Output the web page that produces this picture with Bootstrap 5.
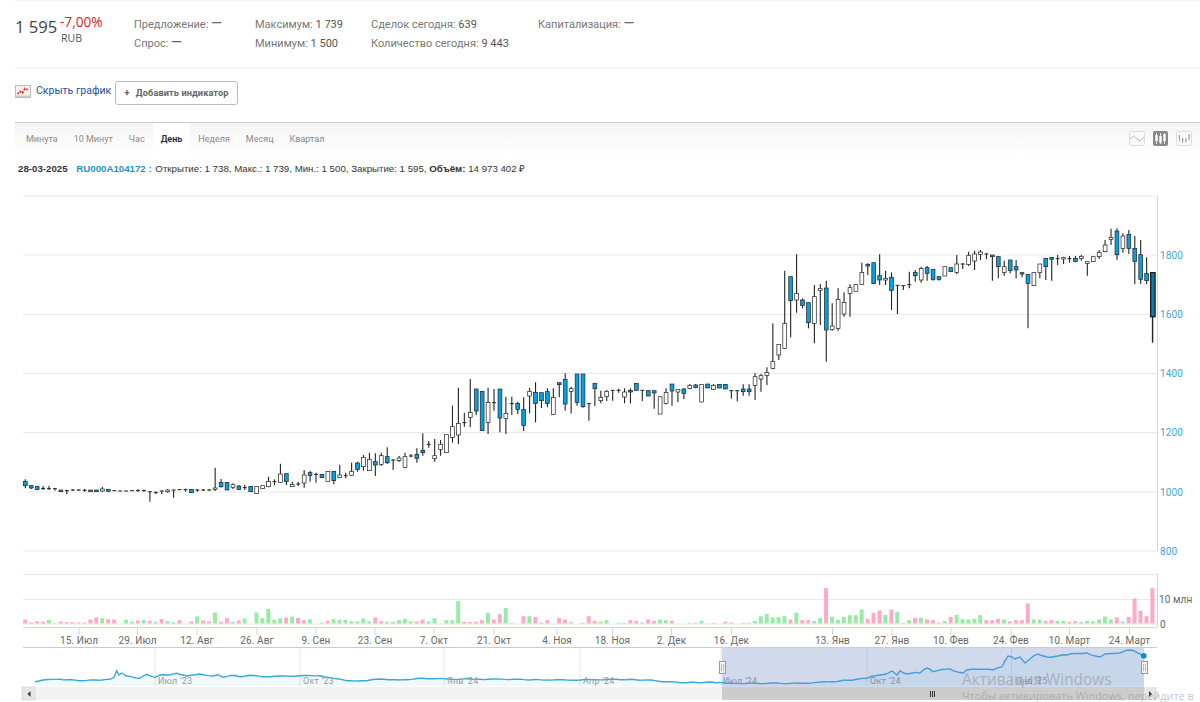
<!DOCTYPE html>
<html lang="ru">
<head>
<meta charset="utf-8">
<title>RU000A104172</title>
<link href="https://cdn.jsdelivr.net/npm/bootstrap@5.3.0/dist/css/bootstrap.min.css" rel="stylesheet">
<style>
html,body{margin:0;height:702px;overflow:hidden;background:#fff;}
body{font-family:Roboto,"Liberation Sans",sans-serif;color:#777;}
.page-rule{height:2px;margin-left:15px;background:#f5f5f5;}
.quote-bar{height:67px;margin-left:15px;font-size:11px;line-height:19px;border-bottom:2px solid #f4f4f4;padding-top:13px;}
.price-main{font-family:"Open Sans",sans-serif;font-size:16.6px;line-height:25px;color:#444;width:45px;white-space:nowrap;margin-top:-1px;}
.price-side{font-family:"Open Sans",sans-serif;width:74px;line-height:16px;white-space:nowrap;margin-top:-1px;}
.price-change{font-size:13.6px;color:#d8232a;line-height:16px;}
.price-cur{font-size:10.5px;color:#555;line-height:15px;padding-left:1px;margin-top:1px;}
.stat-a{width:121px;}.stat-b{width:116px;}.stat-c{width:167px;}
.stat-val{color:#555;}
.stat-dash{font-size:14px;line-height:1;color:#666;}
.tool-row{height:53px;margin-left:15px;padding-top:12px;}
.hide-link{font-size:10.5px;color:#1d4f9f;text-decoration:none;margin-left:5px;margin-right:5px;white-space:nowrap;line-height:20px;width:74px;}
.add-btn{font-size:9.2px;font-weight:700;color:#666;background:#fff;border:1px solid #bbb;border-radius:3px;height:24px;width:123px;padding:0;letter-spacing:.1px;}
.add-btn b{color:#666;margin-right:4px;}
.tab-bar{height:33px;margin-left:15px;border-top:1px solid #ccc;background:linear-gradient(#f4f4f4,#fff);font-size:9px;padding-left:3px;}
.tab-item{padding:0 8px;line-height:32px;color:#8a8a8a;white-space:nowrap;}
.tab-on{background:#fff;color:#333;font-weight:700;}
.type-ico{display:block;}
.info-line{height:25px;padding-left:18px;font-family:"Liberation Sans",sans-serif;font-size:9.7px;line-height:27px;color:#333;white-space:nowrap;}
.info-code{color:#1b95c8;font-weight:700;margin-left:6px;margin-right:1px;}
.chart-box{display:block;}
.ax{font-family:Roboto,"Liberation Sans",sans-serif;font-size:10px;letter-spacing:.1px;}
.nav-lab{font-family:Roboto,"Liberation Sans",sans-serif;font-size:9px;fill:#999;letter-spacing:.2px;}
.wm1{font-family:"Open Sans",sans-serif;font-size:15.4px;fill:#8a8a8a;fill-opacity:.5;}
.wm2{font-family:"Open Sans",sans-serif;font-size:10.9px;fill:#8a8a8a;fill-opacity:.5;}
</style>
</head>
<body>
<div class="page-rule"></div>
<div class="quote-bar d-flex">
  <div class="price-main">1 595</div>
  <div class="price-side"><div class="price-change">-7,00%</div><div class="price-cur">RUB</div></div>
  <div class="stat-a"><div>Предложение: <span class="stat-dash">—</span></div><div>Спрос: <span class="stat-dash">—</span></div></div>
  <div class="stat-b"><div>Максимум: <span class="stat-val">1 739</span></div><div>Минимум: <span class="stat-val">1 500</span></div></div>
  <div class="stat-c"><div>Сделок сегодня: <span class="stat-val">639</span></div><div>Количество сегодня: <span class="stat-val">9 443</span></div></div>
  <div>Капитализация: <span class="stat-dash">—</span></div>
</div>
<div class="tool-row d-flex align-items-start">
  <svg class="mt-1" width="16" height="13" viewBox="0 0 16 13"><rect x=".5" y=".5" width="15" height="12" fill="#f5f2ef" stroke="#bbb"/><path d="M2.500 9 5 6.500 7.500 8 10 3.500 13.500 5" fill="none" stroke="#e23a3a" stroke-width="1.800" stroke-dasharray="2 1.200"/><path d="M1 11.200h14" stroke="#bbb"/></svg>
  <a class="hide-link" href="#">Скрыть график</a>
  <button class="add-btn" type="button"><b>+</b> Добавить индикатор</button>
</div>
<div class="tab-bar d-flex align-items-start">
  <span class="tab-item">Минута</span><span class="tab-item">10 Минут</span><span class="tab-item">Час</span><span class="tab-item tab-on">День</span><span class="tab-item">Неделя</span><span class="tab-item">Месяц</span><span class="tab-item">Квартал</span>
  <div class="ms-auto d-flex gap-2 mt-2 me-2">
    <svg class="type-ico" width="16" height="15" viewBox="0 0 16 15"><rect x=".5" y=".5" width="15" height="14" rx="2" fill="#fafafa" stroke="#ddd"/><path d="M1 8 4.500 5 8 8 11 10 15 6" fill="none" stroke="#bbb"/></svg>
    <svg class="type-ico" width="15" height="15" viewBox="0 0 15 15"><rect width="15" height="15" rx="2" fill="#888"/><g stroke="#fff"><path d="M3.500 2v11M7.500 2v11M11.500 2v11" stroke-width=".8"/><path d="M3.500 4v6M7.500 5v7M11.500 3v7" stroke-width="2.400"/></g></svg>
    <svg class="type-ico" width="16" height="15" viewBox="0 0 16 15"><rect x=".5" y=".5" width="15" height="14" rx="2" fill="#fafafa" stroke="#ddd"/><path d="M3.500 4v6M2.500 5h1M6.500 7v5M6.500 9h1M10 7v4M9 10h1M13 3v6M13 5h1" fill="none" stroke="#999"/></svg>
  </div>
</div>
<div class="info-line"><b>28-03-2025</b> <span class="info-code">RU000A104172 :</span> Открытие: 1 738, Макс.: 1 739, Мин.: 1 500, Закрытие: 1 595, <b>Объём:</b> 14 973 402 ₽</div>
<svg class="chart-box" id="chart" width="1200" height="522" viewBox="0 180 1200 522" xmlns="http://www.w3.org/2000/svg"></svg>
<script>
(function(){
var S=document.getElementById('chart'),o=[];
function X(i){return 25.3+5.933*i;}
var groups=[
{off:440,d:[[124,137,1,118,145],[137,144,1,135,147],[140,148,1,137,151],[146,147,0,138,150],[146,147,0,138,150],[146,147,0,145,152],[150,155,1],[152,153,0,149,163],[150,151,0,148,153],[150,151,0,148,153],[151,152,0,147,155],[150,155,1],[150,155,1],[147,153,0,141,155],[148,154,1],[152,153,0],[153,154,0],[153,154,0],[152,153,0],[152,153,0,148,155],[152,153,0,149,155],[155,156,0,155,185],[157,158,0,155,163],[153,154,0,152,162],[150,155,0,148,158],[150,151,0,150,173],[149,150,0],[149,150,0,146,155],[148,158,1],[150,151,0,147,155],[150,151,0,148,153],[150,151,0,148,153],[144,148,0,83,153],[127,140,1,117,143],[127,150,1],[134,142,0,130,147],[138,148,1,135,150],[143,144,0,135,150],[139,155,1],[139,161,0],[137,146,0],[124,140,0,110,142],[125,126,0,118,136],[102,127,0,71,128],[101,125,1,101,135],[133,140,0,125,141],[132,133,0,125,138],[105,129,0,90,143],[98,106,1,93,125],[103,104,0,98,128],[103,113,1],[94,124,0],[94,122,1,94,133],[105,113,0,75,115],[107,108,0,98,115],[94,106,0,68,107],[69,88,1,65,95],[52,80,0,45,92],[58,92,0,38,92],[65,75,1,40,108],[47,73,0,38,78],[50,68,1,22,72],[60,61,0,58,90],[54,62,0,48,66]]},
{off:360,d:[[290,322,0,278,323],[288,289,0,282,292],[283,295,1,265,308],[271,278,1,220,287],[253,254,0,243,263],[287,296,0,237,305],[253,268,0,240,287],[224,278,0],[200,232,0,137,248],[190,225,0,83,252],[188,189,0,158,200],[157,172,0,57,202],[87,153,1,87,165],[94,212,1],[127,187,0,83,222],[128,129,0,87,152],[87,174,1,87,217],[160,175,0,110,222],[131,132,0,110,165],[130,148,1,125,162],[148,196,1,112,213],[94,108,0,83,160],[97,130,1,67,187],[98,122,1,98,144],[95,130,1,85,142],[112,163,0,85,165],[68,74,1,68,112],[58,132,1,40,152],[86,94,0,80,160],[42,127,1,42,137],[42,140,1,42,143],[131,132,0,131,182],[70,86,1,70,138],[112,122,0,92,130],[94,110,0,90,123],[91,92,0,91,122],[91,92,0,86,98],[96,111,0,85,130],[91,96,1,85,130],[70,91,1],[91,92,0,91,123],[92,108,1],[92,99,1,92,146],[110,162,0],[97,130,0,85,133],[72,93,1,72,137],[88,96,0,88,126],[87,100,1,85,117],[76,86,0,72,88],[75,83,1,72,85],[73,126,0],[72,84,1],[76,88,0,72,90],[73,84,1],[73,87,1],[92,93,0,92,116],[92,93,0,92,124],[87,95,1,73,107],[87,95,1,73,107],[50,76,0,40,120],[47,57,0,42,95],[37,46,0,22,75]]},
{off:240,d:[[365,385,0,250,388],[313,345,0,313,360],[250,325,0,92,327],[110,182,1,110,292],[160,180,0,43,218],[180,196,1,175,205],[188,248,1,188,265],[170,250,0,135,310],[146,151,0,132,255],[144,270,1,122,365],[258,268,0,190,272],[178,265,0,145,272],[187,222,0,157,230],[143,160,0,133,230],[134,154,0],[97,133,0,68,135],[73,78,1,70,105],[68,131,1],[107,120,1,43,135],[115,120,0,92,135],[112,151,1,97,210],[136,137,0,136,222],[137,138,0,137,150],[134,135,0,95,145],[97,107,1,90,125],[85,120,0,80,128],[83,100,1,78,122],[88,118,1,88,122],[110,118,1,110,122],[80,108,0],[83,95,1],[72,97,0,45,103],[72,73,0,70,87],[46,74,0,35,78],[42,63,0,32,90],[36,43,0,30,60],[42,43,0,40,58],[45,50,1,45,122],[50,80,1,50,115],[80,97,0,62,107],[60,92,1,60,100],[80,90,1,60,115],[98,102,1,98,112],[103,130,1,103,265],[97,137,0],[72,97,0,72,115],[55,80,1,55,120],[52,58,1,52,122],[56,57,0,45,75],[52,57,0,50,72],[56,57,0,48,68],[55,64,1,48,66],[49,55,0,45,62],[65,70,0,65,107],[50,65,0],[37,50,0,30,57],[15,35,0,0,37]]},
{off:120,d:[[352,358,0,326,375],[333,404,1,325,420],[348,385,0,340,398],[343,385,1,330,402],[385,424,1,348,492],[404,478,1,360,492],[460,482,1,412,492],[458,590,1,458,668]]}
];
[196,255,314.5,373.5,432.5,492,551,574.5,599.5,624].forEach(function(y){
  o.push('<path d="M23 '+y+'H1157" stroke="#e8e8e8" stroke-width="1" fill="none"/>');
});
o.push('<path d="M1157.500 196V551M1157.500 574V627M23 627.500H1157" stroke="#ccd6eb" fill="none"/>');
var vol=[[12,0],[3,0],[6,0],[5,0],[11,1],[1,1],[6,0],[4,0],[4,0],[3,0],[3,0],[12,0],[18,0],[16,1],[13,0],[12,0],[0,0],[11,1],[6,1],[9,0],[11,1],[8,0],[5,1],[13,0],[7,1],[4,1],[10,0],[0,0],[6,0],[21,1],[9,0],[6,0],[33,1],[5,0],[16,0],[5,1],[9,0],[15,1],[0,0],[33,1],[16,1],[44,1],[11,1],[16,1],[18,0],[21,1],[17,0],[10,0],[12,1],[0,0],[3,1],[8,0],[13,1],[11,1],[11,1],[7,1],[6,1],[15,1],[6,1],[18,0],[7,0],[5,1],[4,0],[10,1],
[14,1],[6,1],[6,0],[12,0],[6,1],[16,1],[0,0],[10,1],[10,1],[67,1],[5,0],[4,0],[5,0],[10,0],[32,1],[12,0],[28,0],[46,1],[2,1],[0,0],[22,0],[22,1],[20,0],[3,0],[10,0],[0,0],[17,0],[12,0],[5,1],[0,0],[2,0],[22,0],[8,0],[6,1],[10,1],[0,0],[2,1],[2,1],[10,0],[8,0],[3,1],[12,0],[8,0],[12,1],[10,1],[8,0],[0,0],[0,0],[2,1],[2,0],[8,1],[0,0],[2,1],[0,0],[5,0],[3,0],[0,0],[2,0],[2,0],[8,1],
[22,1],[29,1],[18,1],[20,1],[22,1],[12,0],[32,1],[10,0],[10,0],[8,1],[17,1],[106,0],[20,1],[11,1],[20,1],[25,1],[25,1],[42,1],[14,0],[32,0],[39,0],[26,1],[42,0],[35,1],[2,1],[10,1],[17,0],[17,1],[12,0],[10,0],[3,0],[8,1],[20,0],[26,1],[13,1],[12,1],[14,1],[25,1],[10,0],[10,0],[14,0],[12,1],[6,0],[10,0],[10,0],[60,0],[12,1],[12,1],[8,0],[10,0],[8,1],[8,1],[5,0],[7,0],[5,1],[8,1],[6,1],[12,1],[21,1],[12,1],[18,0],[6,1],[20,0],[75,0],[38,0],[22,0],[106,0]];
vol.forEach(function(v,i){
  if(!v[0])return;var h=v[0]/3;
  o.push('<rect x="'+(X(i)-2.2).toFixed(2)+'" y="'+(623.5-h).toFixed(2)+'" width="4" height="'+h.toFixed(2)+'" fill="'+(v[1]?'#98eba6':'#ffa9c6')+'"/>');
});
var n=0;
groups.forEach(function(g){
  g.d.forEach(function(c){
    var x=X(n).toFixed(2),last=n===190,t=g.off+c[0]/3,b=g.off+c[1]/3,wt=g.off+(c[3]===undefined?c[0]:c[3])/3,wb=g.off+(c[4]===undefined?c[1]:c[4])/3;
    o.push('<path d="M'+x+' '+wt.toFixed(2)+'V'+wb.toFixed(2)+'" stroke="#222" stroke-width="'+(last?1.4:1.1)+'"/>');
    if(c[1]-c[0]<2){
      o.push('<path d="M'+(X(n)-2).toFixed(2)+' '+t.toFixed(2)+'h4" stroke="#222" stroke-width="1"/>');
    }else{
      o.push('<rect x="'+(X(n)-1.9).toFixed(2)+'" y="'+t.toFixed(2)+'" width="'+(last?4.4:3.800)+'" height="'+(b-t).toFixed(2)+'" fill="'+(c[2]?(last?'#067fb0':'#069fe2'):'#fff')+'" stroke="#222" stroke-width="'+(last?1.4:.7)+'"/>');
    }
    n++;
  });
});
[[1800,258.5],[1600,318],[1400,377],[1200,436],[1000,495.500],[800,554.500]].forEach(function(l){
  o.push('<text class="ax" x="1160" y="'+l[1]+'" fill="#3aa9d6">'+l[0]+'</text>');
});
o.push('<text class="ax" x="1159" y="603" fill="#666">10 млн</text><text class="ax" x="1160" y="627.5" fill="#666">0</text>');
[[79,'15. Июл'],[137.500,'29. Июл'],[197,'12. Авг'],[257,'26. Авг'],[316,'9. Сен'],[375,'23. Сен'],[434,'7. Окт'],[494,'21. Окт'],[557,'4. Ноя'],[612.500,'18. Ноя'],[671.500,'2. Дек'],[731.500,'16. Дек'],[832.500,'13. Янв'],[892,'27. Янв'],[951,'10. Фев'],[1011,'24. Фев'],[1069.500,'10. Март'],[1129.500,'24. Март']].forEach(function(t){
  o.push('<path d="M'+t[0]+' 628V635" stroke="#ccd6eb"/><text class="ax" x="'+t[0]+'" y="644" text-anchor="middle" fill="#666">'+t[1]+'</text>');
});
o.push('<path d="M23 647.500H1157" stroke="#ccc"/>');
[155,300,444,580,721,867,1011.500].forEach(function(x){o.push('<path d="M'+x+' 648V686" stroke="#e6e6e6"/>');});
var raw='35,681.7 43,680 60,679.3 83,680.7 110,679.3 114,677.3 116.7,670.7 119,675 121.7,673 126.7,676 133,677.3 140,678.3 146.7,674.3 155,677.3 160,675 170,675 176.7,673.3 186.7,676 200,674 213,676 218,674.7 223,677.3 231.7,675.3 240,676.7 250,675.3 266.7,676.7 300,675.7 320,675.7 333,678.3 346.7,680.7 366.7,680.7 380,679 400,680 423,678.3 447,679 480,679.3 513,679.3 547,680 580,680 613,679.3 647,680 667,681.7 683,682.7 713,682.3 723,682.7 733,683.3 800,683.3 833,681.7 867,678.3 880,675 892,671 897,675 900,671 907,674 920,673 927,668 933,671.7 950,669 963,673 967,670 993,670 1002,666.7 1008,656 1015,659 1020,657 1025,663 1030,659 1038,654 1047,657 1067,655 1087,653 1100,657 1105,654 1120,653 1130,650 1137,652.7 1143.500,655.7'.split(' ').map(function(p){return p.split(',').map(Number);});
var pts=[];
raw.forEach(function(p,k){
  if(k===0){pts.push(p);return;}
  var q=raw[k-1],d=p[0]-q[0],s=Math.max(1,Math.round(d/4));
  for(var j=1;j<=s;j++){
    var xx=q[0]+d*j/s,yy=q[1]+(p[1]-q[1])*j/s;
    if(j<s&&xx>860) yy+=Math.sin(xx*1.7)*.9;
    else if(j<s) yy+=Math.sin(xx*1.3)*.35;
    pts.push([xx,yy]);
  }
});
var line=pts.map(function(p){return p[0].toFixed(1)+','+p[1].toFixed(1);}).join(' ');
o.push('<polygon points="35,686 '+line+' 1143.500,686" fill="#29a3d6" fill-opacity=".07"/>');
o.push('<polyline points="'+line+'" fill="none" stroke="#3aa9d8" stroke-width="1.400"/>');
[[158,"Июл '23"],[303,"Окт '23"],[447,"Янв '24"],[583,"Апр '24"],[723,"Июл '24"],[870,"Окт '24"],[1016,"Янв '25"]].forEach(function(t){
  o.push('<text class="nav-lab" x="'+t[0]+'" y="684">'+t[1]+'</text>');
});
o.push('<rect x="722" y="648" width="422" height="39" fill="#6685c2" fill-opacity=".3"/>');
o.push('<circle cx="1143.800" cy="655.700" r="2.800" fill="#0a8ac2"/>');
o.push('<rect x="22" y="687" width="1135" height="13" fill="#f2f2f2"/><rect x="22" y="687" width="13" height="13" fill="#e6e6e6" stroke="#ccc" stroke-width=".5"/><path d="M30.500 691v6l-3-3z" fill="#333"/>');
o.push('<rect x="722" y="687" width="422" height="13" fill="#ccc"/><path d="M930.500 691v6M932.500 691v6M934.500 691v6" stroke="#333"/>');
o.push('<rect x="1144" y="687" width="13" height="13" fill="#e6e6e6"/><path d="M1149 691v6l3-3z" fill="#333"/>');
[722,1144].forEach(function(x){
  o.push('<rect x="'+(x-3)+'.500" y="661.500" width="6" height="12" fill="#f2f2f2" stroke="#999"/><path d="M'+(x-1)+'.500 664v7M'+(x+1)+'.500 664v7" stroke="#bbb"/>');
});
o.push('<text class="wm1" x="962" y="685">Активация Windows</text><text class="wm2" x="962" y="699.5">Чтобы активировать Windows, перейдите в</text>');
S.innerHTML=o.join('');
})();
</script>
<script src="https://cdn.jsdelivr.net/npm/bootstrap@5.3.0/dist/js/bootstrap.bundle.min.js"></script>
</body>
</html>
